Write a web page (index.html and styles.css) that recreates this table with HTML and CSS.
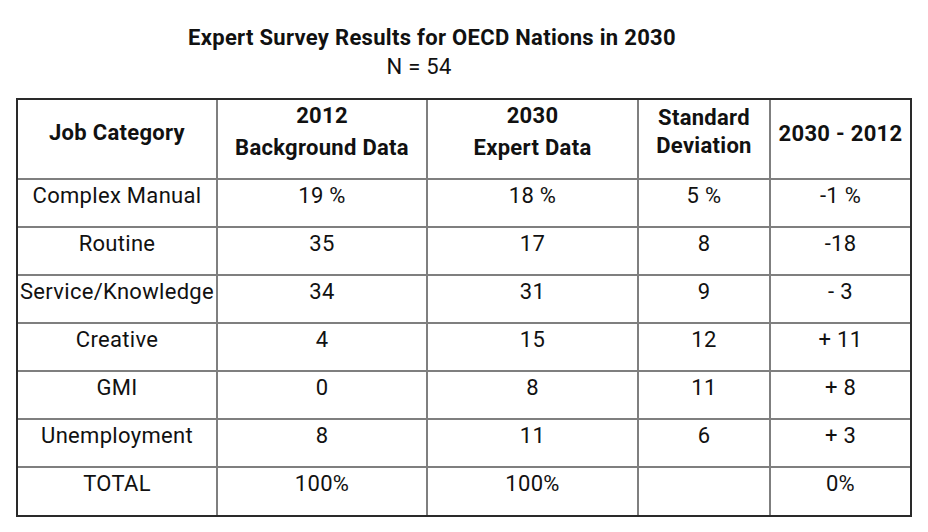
FILE: index.html
```html
<!DOCTYPE html>
<html lang="en">
<head>
<meta charset="utf-8">
<title>Expert Survey Results for OECD Nations in 2030</title>
<link rel="stylesheet" href="styles.css">
</head>
<body>
<main class="page">
  <h1 class="title">Expert Survey Results for OECD Nations in 2030</h1>
  <p class="subtitle">N = 54</p>
  <div class="table-wrap">
    <table class="results">
      <colgroup>
        <col class="c1"><col class="c2"><col class="c3"><col class="c4"><col class="c5">
      </colgroup>
      <thead>
        <tr>
          <th class="h-single">Job Category</th>
          <th class="h-double">2012<br>Background Data</th>
          <th class="h-double">2030<br>Expert Data</th>
          <th class="h-tight">Standard<br>Deviation</th>
          <th class="h-single h-last">2030 - 2012</th>
        </tr>
      </thead>
      <tbody>
        <tr><td>Complex Manual</td><td>19 %</td><td>18 %</td><td>5 %</td><td>-1 %</td></tr>
        <tr><td>Routine</td><td>35</td><td>17</td><td>8</td><td>-18</td></tr>
        <tr><td>Service/Knowledge</td><td>34</td><td>31</td><td>9</td><td>- 3</td></tr>
        <tr><td>Creative</td><td>4</td><td>15</td><td>12</td><td>+ 11</td></tr>
        <tr><td>GMI</td><td>0</td><td>8</td><td>11</td><td>+ 8</td></tr>
        <tr><td>Unemployment</td><td>8</td><td>11</td><td>6</td><td>+ 3</td></tr>
        <tr><td>TOTAL</td><td>100%</td><td>100%</td><td></td><td>0%</td></tr>
      </tbody>
    </table>
  </div>
</main>
</body>
</html>
```

FILE: styles.css
```css
html, body {
  margin: 0;
  padding: 0;
  background: #ffffff;
}

body {
  font-family: Roboto, "Liberation Sans", Arial, sans-serif;
  color: #111111;
  letter-spacing: 0.3px;
}

.page {
  padding: 26px 16px 0 16px;
}

.title {
  margin: 0;
  padding-right: 64px;
  font-size: 22px;
  font-weight: 700;
  line-height: 24px;
  text-align: center;
}

.subtitle {
  margin: 5px 0 0 0;
  padding-right: 90px;
  font-size: 22px;
  line-height: 24px;
  text-align: center;
}

.table-wrap {
  margin-top: 19px;
  border: 2px solid #2a2a2a;
}

.results {
  width: 100%;
  table-layout: fixed;
  border-collapse: collapse;
  border-style: hidden;
  font-size: 22px;
}

.c1 { width: 199px; }
.c2 { width: 210px; }
.c3 { width: 211px; }
.c4 { width: 132px; }
.c5 { width: 140px; }

.results th,
.results td {
  border: 2px solid #7f7f7f;
  padding: 0 1px;
  text-align: center;
  vertical-align: top;
  white-space: nowrap;
}

.results thead tr {
  height: 79px;
}

.results tbody tr {
  height: 48px;
}

.results th {
  font-weight: 700;
}

.results .h-single {
  padding-top: 21px;
  line-height: 24px;
}

.results .h-last {
  padding-top: 22px;
}

.results .h-double {
  line-height: 32px;
}

.results .h-tight {
  padding-top: 4px;
  line-height: 28px;
}

.results td {
  padding-top: 4px;
  line-height: 24px;
}
```
